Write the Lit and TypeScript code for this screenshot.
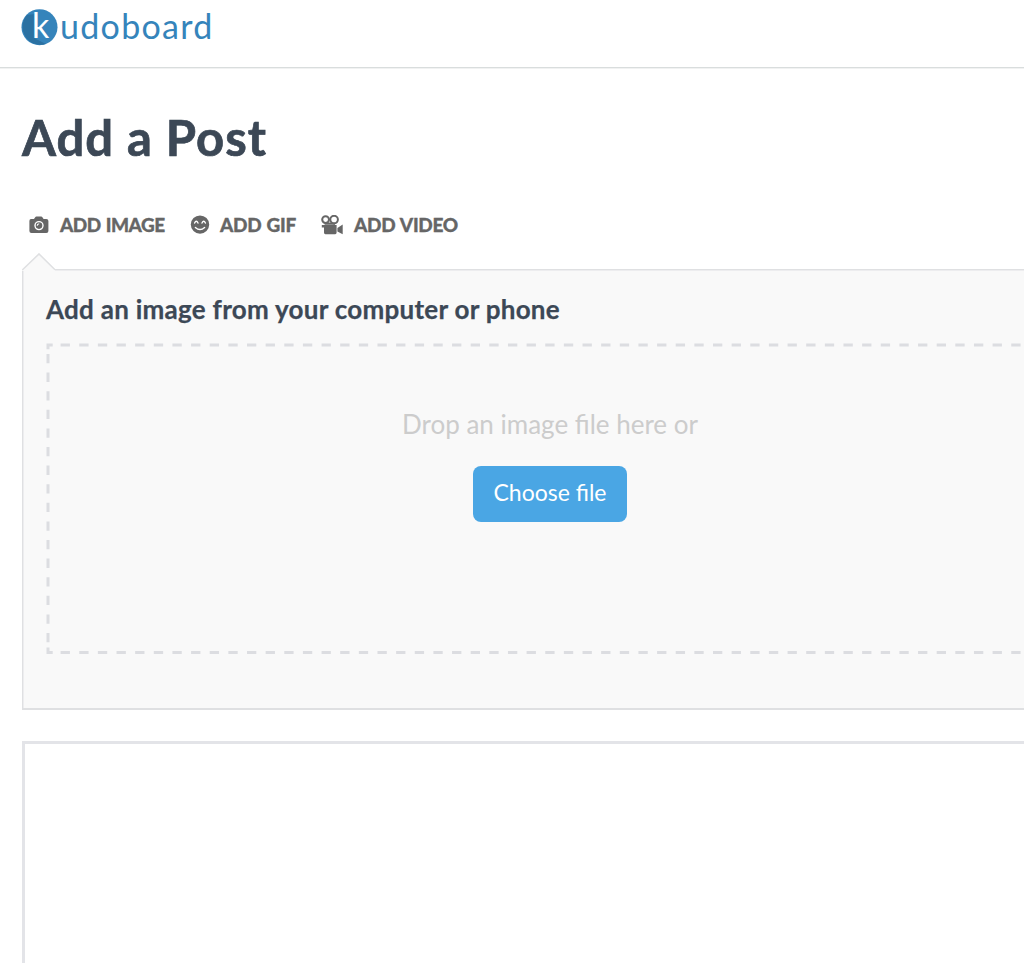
import { LitElement, html, css, svg } from "lit";
import { customElement } from "lit/decorators.js";

const icons = {
  image: svg`<svg viewBox="0 0 20 18" width="20" height="18"><path fill="#666" d="M2 3H5L6.2 1.2Q6.6 .6 7.4 .6H12.2Q13 .6 13.4 1.2L14.6 3H17.3Q19.4 3 19.4 5V15Q19.4 17 17.3 17H2.4Q.4 17 .4 15V5Q.4 3 2 3Z"/><circle cx="10" cy="9.6" r="4" fill="none" stroke="#fff" stroke-width="1.4"/><path d="M8.2 9.8Q8.2 7.9 10.2 7.8" fill="none" stroke="#fff" stroke-width="1.1"/></svg>`,
  gif: svg`<svg viewBox="0 0 20 20" width="20" height="20"><circle cx="10" cy="9.6" r="9.2" fill="#666"/><g fill="none" stroke="#fff" stroke-width="1.4" stroke-linecap="round"><path d="M4.6 8Q6.3 4.6 8 8M12 8Q13.7 4.6 15.4 8M5.4 12.4Q10 16.6 14.6 12.4"/></g></svg>`,
  video: svg`<svg viewBox="0 0 22 20" width="22" height="20"><g fill="none" stroke="#666" stroke-width="2"><circle cx="4.6" cy="4.6" r="3.4"/><circle cx="13.1" cy="4.6" r="3.8"/></g><path fill="#666" d="M3.6 7.4H14V9.8H3.6ZM.8 10H15.6V17.6Q15.6 19.2 14.2 19.2H4.4Q3 19.2 3 17.6V12.6H.8ZM16.4 13L21.7 9.6V19.2L16.4 16.4Z"/></svg>`,
};

@customElement("app-root")
export class AppRoot extends LitElement {
  static styles = css`
    :host { display: block; height: 963px; overflow: hidden; background: #fff; font-family: Lato, "Open Sans", sans-serif; color: #3c4856; }
    * { box-sizing: border-box; }
    header { height: 68px; padding: 9px 0 0 21px; border-bottom: 1px solid #d9dddd; box-shadow: 0 1px #f1f2f2; display: flex; align-items: flex-start; }
    .mark { width: 37px; height: 37px; display: block; overflow: visible; }
    .k { font: 34px Lato, sans-serif; fill: #fff; }
    .word { font-family: Lato, sans-serif; font-size: 34px; line-height: 36px; color: #3584bb; letter-spacing: 1.3px; margin: -1px 0 0 2px; }
    main { padding: 0 0 0 22px; width: 1077px; }
    h1 { margin: 38px 0 0; height: 62px; font-size: 49px; line-height: 62px; font-weight: 700; letter-spacing: 1px; -webkit-text-stroke: .7px #3c4856; white-space: nowrap; }
    nav { display: flex; height: 30px; margin-top: 42px; padding-left: 7px; }
    .tab { display: flex; align-items: center; color: #666; font-size: 19px; font-weight: 900; letter-spacing: -.3px; word-spacing: 1px; -webkit-text-stroke: .3px #666; line-height: 30px; white-space: nowrap; }
    .t1 { letter-spacing: -.5px; }
    .icon { display: flex; }
    .t1 { width: 161px; } .t2 { width: 131px; }
    .t1 .icon { width: 31px; } .t2 .icon { width: 30px; } .t3 .icon { width: 33px; }
    .notch { display: block; width: 36px; height: 18px; margin: 13px 0 -2px; position: relative; }
    .panel { height: 441px; background: #f9f9f9; border: 2px solid #dfe0e2; border-width: 1px 2px 2px 1px; padding: 24px 22px 0 23px; box-shadow: inset 1px 1px #ededef; }
    h2 { margin: 0; height: 30px; font-size: 26px; line-height: 30px; font-weight: 700; letter-spacing: .27px; -webkit-text-stroke: .25px #3c4856; white-space: nowrap; }
    .drop { margin-top: 19px; width: 1008px; height: 311px; display: grid; }
    .drop > * { grid-area: 1 / 1; }
    .content { display: flex; flex-direction: column; align-items: center; padding-top: 66px; }
    .hint { font-size: 26px; line-height: 30px; color: #ccc; }
    button { margin-top: 27px; width: 154px; height: 56px; padding: 0 0 4px; border: 0; border-radius: 8px; background: #4aa6e4; color: #fff; font: 23px Lato, sans-serif; }
    .editor { margin-top: 31px; height: 300px; border: 3px solid #e3e4e8; }
  `;

  render() {
    return html`
      <header>
        <svg class="mark" viewBox="0 0 37 37">
          <circle cx="18.5" cy="18.2" r="18" fill="#3584bb" />
          <path d="M14 5V29.5L25 35A18 18 0 0 1 6 6Z" fill="#2b71a2" />
          <text class="k" x="11" y="29">k</text>
        </svg>
        <span class="word">udoboard</span>
      </header>
      <main>
        <h1>Add a Post</h1>
        <nav>
          <div class="tab t1"><span class="icon">${icons.image}</span><span>ADD IMAGE</span></div>
          <div class="tab t2"><span class="icon">${icons.gif}</span><span>ADD GIF</span></div>
          <div class="tab t3"><span class="icon">${icons.video}</span><span>ADD VIDEO</span></div>
        </nav>
        <svg class="notch" viewBox="0 0 36 18"><path d="M0 18L1 16L17 1L33 16.5V18Z" fill="#f9f9f9" /><path d="M.5 16.8L17 .9L33 16.8" fill="none" stroke="#dfe0e2" stroke-width="1.5" /></svg>
        <section class="panel">
          <h2>Add an image from your computer or phone</h2>
          <div class="drop">
            <svg width="1008" height="311" fill="none" stroke="#dcdde1" stroke-width="3">
              <path d="M2 6.3V2H6.7M2 304.5V309.5H6.7" />
              <path d="M14.6 2H1007M14.6 309.5H1007" stroke-dasharray="9.32 9.32" />
              <path d="M2 11V301" stroke-dasharray="9.3 9.3" />
            </svg>
            <div class="content"><span class="hint">Drop an image file here or</span><button>Choose file</button></div>
          </div>
        </section>
        <div class="editor"></div>
      </main>
    `;
  }
}
